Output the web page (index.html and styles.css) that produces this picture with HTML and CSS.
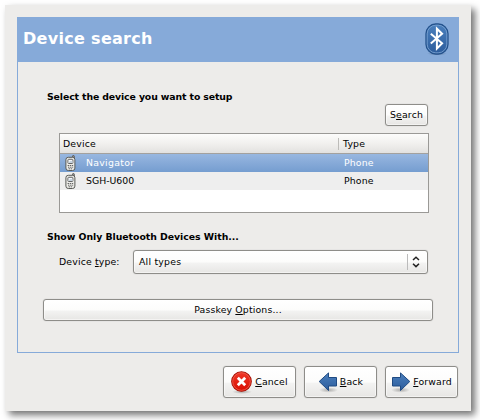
FILE: index.html
```html
<!DOCTYPE html>
<html lang="en">
<head>
<meta charset="utf-8">
<title>Device search</title>
<link rel="stylesheet" href="styles.css">
</head>
<body>
<svg class="defs" width="0" height="0">
  <defs>
    <linearGradient id="blue" x1="0" y1="0" x2="0" y2="1"><stop offset="0" stop-color="#4b80bd"/><stop offset="1" stop-color="#2c5c9c"/></linearGradient>
    <linearGradient id="red" x1="0" y1="0" x2="0" y2="1"><stop offset="0" stop-color="#f03a2a"/><stop offset="1" stop-color="#d90d00"/></linearGradient>
    <radialGradient id="shade"><stop offset="0" stop-color="#000" stop-opacity=".28"/><stop offset="1" stop-color="#000" stop-opacity="0"/></radialGradient>
    <symbol id="phone" viewBox="0 0 12 16">
      <path d="M7.5 3V1.3q0-.8.9-.8t.9.8V3" fill="#999" stroke="#555" stroke-width=".9"/>
      <rect x=".9" y="2.3" width="9" height="13.2" rx="2.4" fill="#ecece8" stroke="#585a56"/>
      <rect x="2.9" y="4.3" width="5" height="4.2" rx=".8" fill="#f4f8fc" stroke="#666"/>
      <path d="M3.4 8l1.6-2h2.5v2z" fill="#c5d2de"/>
      <path d="M2.6 10.5h6M3 12.2h5.2M3.6 13.8h4" stroke="#666" stroke-width="1" stroke-dasharray="1.4 .7" fill="none"/>
    </symbol>
  </defs>
</svg>
<main class="window">
  <section class="page">
    <header class="banner">
      <h1>Device search</h1>
      <svg class="bt" width="24" height="33" viewBox="0 0 24 33">
        <ellipse cx="12" cy="30.5" rx="10" ry="2" fill="url(#shade)"/>
        <rect x="1" y="1" width="22" height="30" rx="9.8" fill="url(#blue)" stroke="#24528c" stroke-width="1.3"/>
        <rect x="2.2" y="2.2" width="19.6" height="27.6" rx="8.6" fill="none" stroke="#7fa6d3" stroke-width=".8"/>
        <path d="M5.8 10.7l11.3 9.6-5.2 5.3V5.7l5.2 5.1L5.8 20.6" fill="none" stroke="#fff" stroke-width="2"/>
      </svg>
    </header>
    <div class="content">
      <h2 class="prompt">Select the device you want to setup</h2>
      <div class="search-row"><button class="btn search"><span>S<u>e</u>arch</span></button></div>
      <div class="table">
        <div class="row head"><span class="name">Device</span><span class="type">Type</span></div>
        <div class="row selected"><svg class="phone" width="12" height="16"><use href="#phone"/></svg><span class="name">Navigator</span><span class="type">Phone</span></div>
        <div class="row alt"><svg class="phone" width="12" height="16"><use href="#phone"/></svg><span class="name">SGH-U600</span><span class="type">Phone</span></div>
      </div>
      <h2 class="filter">Show Only Bluetooth Devices With...</h2>
      <div class="field">
        <span class="label">Device <u>t</u>ype:</span>
        <div class="btn combo"><span>All types</span><span class="arrows"><svg width="8" height="12" viewBox="0 0 8 12"><path d="M1 4l3-2.8L7 4M1 7.8l3 2.8 3-2.8" fill="none" stroke="#222" stroke-width="1.5"/></svg></span></div>
      </div>
      <button class="btn passkey"><span>Passkey <u>O</u>ptions...</span></button>
    </div>
  </section>
  <footer class="actions">
    <button class="btn action"><svg width="22" height="23" viewBox="0 0 22 23">
      <ellipse cx="11" cy="20.8" rx="10" ry="2.2" fill="url(#shade)"/>
      <circle cx="10.5" cy="10.5" r="9.8" fill="url(#red)" stroke="#a91408" stroke-width="1.1"/>
      <circle cx="10.5" cy="10.5" r="8.8" fill="none" stroke="#f36556" stroke-width=".7"/>
      <path d="M6.8 6.8l7.4 7.4M14.2 6.8l-7.4 7.4" stroke="#fff" stroke-width="2.8"/></svg><span><u>C</u>ancel</span></button>
    <button class="btn action"><svg width="20" height="21" viewBox="0 0 20 21">
      <ellipse cx="10.5" cy="18" rx="9.5" ry="2.8" fill="url(#shade)"/>
      <path d="M1.2 9.5L10.5.9V5.5h8v8.5h-8v4.5z" fill="url(#blue)" stroke="#1f4a82"/></svg><span><u>B</u>ack</span></button>
    <button class="btn action"><svg width="20" height="21" viewBox="0 0 20 21">
      <ellipse cx="9.5" cy="18" rx="9.5" ry="2.8" fill="url(#shade)"/>
      <path d="M18.8 9.5L9.5.9V5.5h-8v8.5h8v4.5z" fill="url(#blue)" stroke="#1f4a82"/></svg><span><u>F</u>orward</span></button>
  </footer>
</main>
</body>
</html>
```
FILE: styles.css
```css
* { box-sizing: border-box; }
body {
  margin: 0;
  padding: 5px;
  height: 420px;
  overflow: hidden;
  background: #fff;
  color: #000;
  font: 9.33px/12px "DejaVu Sans", sans-serif;
  letter-spacing: .15px;
}
.defs { position: absolute; }
u { text-decoration: underline 1px; text-underline-offset: 1px; text-decoration-skip-ink: none; }
.window {
  width: 466px;
  height: 406px;
  padding: 12px;
  background: #edecea;
  box-shadow: 4px 4px 7px rgba(0, 0, 0, .55);
}
.page { width: 442px; height: 336px; border: 1px solid #86aad9; }
.banner {
  display: flex;
  justify-content: space-between;
  height: 44px;
  padding: 5px 9px 0 5px;
  background: #86aad9;
}
h1 { margin: 6px 0 0; font-size: 16px; line-height: 20px; letter-spacing: .3px; color: #fff; }
.content { padding: 29px 25px 0; display: flex; flex-direction: column; }
h2 { margin: 0 0 0 4px; font-size: 9.33px; line-height: 12px; white-space: nowrap; }
.prompt { letter-spacing: -.11px; }
.btn {
  display: flex;
  align-items: center;
  justify-content: center;
  padding: 0;
  border: 1px solid #8e8d89;
  border-radius: 3px;
  background: linear-gradient(#fff, #fcfcfb 50%, #f3f3f2 55%, #e7e6e4);
  box-shadow: inset 0 0 0 1px rgba(255, 255, 255, .5), 0 0 1px #aaa;
  color: #000;
  font: inherit;
  letter-spacing: inherit;
  white-space: pre;
}
.search-row { display: flex; justify-content: flex-end; margin: 1px 5px 0 0; }
.search { width: 43px; height: 22px; }
.table {
  width: 370px;
  height: 80px;
  margin: 7px 0 0 16px;
  border: 1px solid #9a9996;
  background: #fff;
}
.row { display: flex; align-items: center; height: 18px; padding-left: 5px; }
.row .name { width: 258px; margin-left: 9px; }
.head { height: 20px; padding-left: 3px; border-bottom: 1px solid #a3a19e; background: linear-gradient(#fcfcfb, #f1f0ee 50%, #e2e1df); }
.head .name { width: 276px; margin: 0; border-right: 1px solid #bdbcb9; }
.head .type { margin-left: 4px; }
.selected { background: linear-gradient(#98b7e0, #759dd0); color: #fff; }
.selected .name { letter-spacing: .3px; }
.alt { background: #eee; }
.alt .name { letter-spacing: 0; }
.filter { margin-top: 18px; letter-spacing: -.03px; }
.field { display: flex; align-items: center; margin: 7px 0 0 16px; }
.label { width: 74px; white-space: nowrap; }
.combo { width: 295px; height: 24px; padding: 0 7px 0 5px; justify-content: space-between; }
.combo > span:first-child { letter-spacing: .22px; }
.arrows { display: flex; align-items: center; height: 16px; padding-left: 4px; border-left: 1px solid #bbb; }
.passkey { width: 390px; height: 22px; margin-top: 25px; }
.actions { display: flex; justify-content: flex-end; gap: 8px; margin: 13px 1px 0 0; }
.action { width: 73px; height: 32px; gap: 2px; }
```
